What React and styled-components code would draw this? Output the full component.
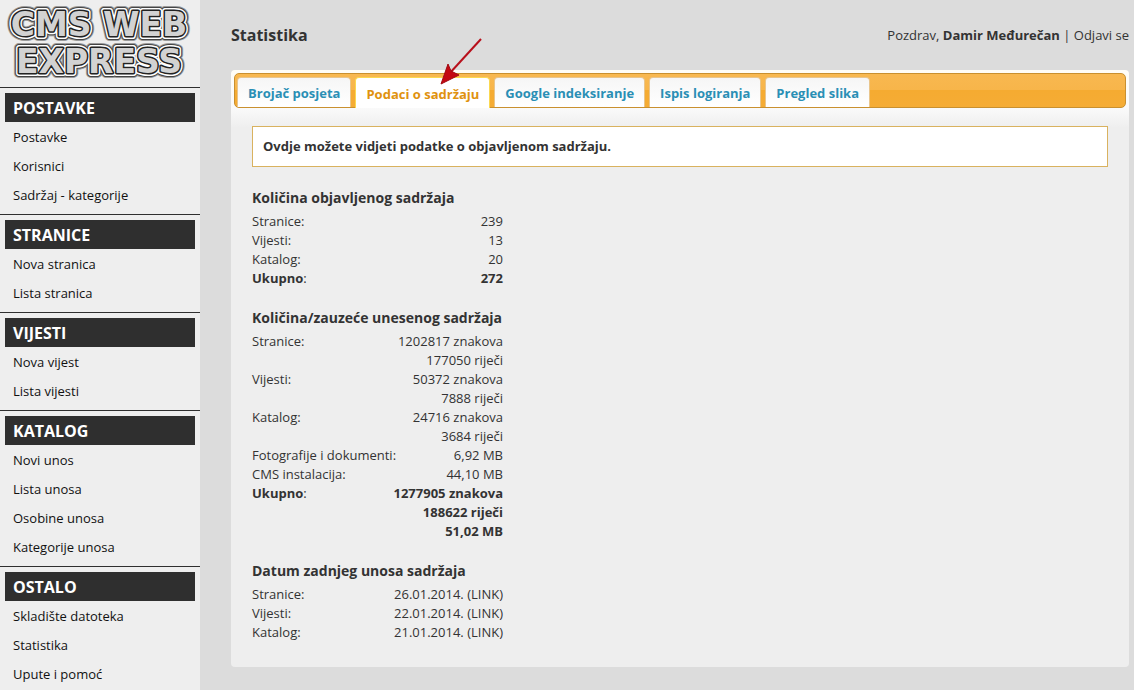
import React, { useState } from 'react';
import styled, { createGlobalStyle } from 'styled-components';

const GlobalStyle = createGlobalStyle`
  * {
    box-sizing: border-box;
  }

  body {
    margin: 0;
    background: #dcdcdc;
    color: #333;
    font-family: "Open Sans", "Noto Sans", sans-serif;
    font-size: 13px;
    line-height: 19px;
  }

  a {
    color: inherit;
    text-decoration: none;
  }
`;

const Page = styled.div`
  display: flex;
  min-height: 100vh;
`;

const Sidebar = styled.aside`
  flex: 0 0 200px;
  background: #eee;
  color: #111;
`;

const LogoLink = styled.a`
  display: block;
  height: 87px;

  svg {
    display: block;
  }

  text {
    font-family: "DejaVu Sans", sans-serif;
    font-size: 33px;
    font-weight: bold;
  }
`;

const MenuGroup = styled.nav`
  border-top: 1px solid #2f2f2f;
  padding: 5px 0;

  &:last-child {
    padding-bottom: 0;
  }
`;

const MenuTitle = styled.h2`
  margin: 0 5px;
  padding: 5px 8px 4px;
  background: #2f2f2f;
  color: #fff;
  font-size: 16px;
  line-height: 20px;
`;

const MenuLink = styled.a`
  display: block;
  padding: 6px 13px 4px;

  &:hover {
    text-decoration: underline;
  }
`;

const Main = styled.main`
  flex: 1;
  min-width: 0;
  padding: 0 5px 23px 31px;
`;

const Header = styled.header`
  display: flex;
  align-items: center;
  justify-content: space-between;
  height: 70px;

  h1 {
    margin: 0;
    font-size: 16px;
    line-height: 20px;
  }
`;

const Panel = styled.section`
  padding: 3px;
  border-radius: 4px;
  background: linear-gradient(#fffdf6 0, #fafafa 38px, #eee 58px);
`;

const TabBar = styled.div`
  display: flex;
  gap: 4px;
  height: 35px;
  padding: 3px 2px 0;
  border: 1px solid #c9902f;
  border-radius: 5px;
  background: linear-gradient(#f8b850 0, #f7b54a 50%, #f5ab31 50%, #f5ac35 100%);
`;

const TabItem = styled.div`
  position: relative;
  display: flex;
  margin-bottom: ${(props) => (props.$active ? '-1px' : '0')};
`;

const Tab = styled.button`
  padding: 2px 10px 0;
  border: 1px solid ${(props) => (props.$active ? '#fbd850' : '#e9c58c')};
  border-bottom: none;
  border-radius: 4px 4px 0 0;
  background: ${(props) => (props.$active ? '#fff' : 'linear-gradient(#f6f6f6, #fff)')};
  color: ${(props) => (props.$active ? '#e0920f' : '#2a8fb5')};
  font-family: inherit;
  font-size: 13px;
  font-weight: bold;
  line-height: 19px;
  white-space: nowrap;
  cursor: pointer;
`;

const Arrow = styled.svg`
  position: absolute;
  top: -39px;
  right: 8px;
  pointer-events: none;
`;

const Content = styled.div`
  padding: 18px 18px 22px;
`;

const Notice = styled.p`
  margin: 0 0 21px;
  padding: 10px;
  border: 1px solid #d9b25f;
  background: #fff;
  font-weight: bold;
`;

const Block = styled.section`
  & + & {
    margin-top: 20px;
  }

  h3 {
    margin: 0 0 4px;
    font-size: 14px;
    line-height: 20px;
  }
`;

const StatTable = styled.table`
  width: 251px;
  table-layout: fixed;
  border-collapse: collapse;

  th,
  td {
    padding: 0;
    vertical-align: top;
    white-space: nowrap;
  }

  th {
    font-weight: normal;
    text-align: left;
  }

  td {
    text-align: right;
  }
`;

const Value = styled.div`
  font-weight: ${(props) => (props.$total ? 'bold' : 'normal')};
`;

const menu = [
  { title: 'POSTAVKE', items: ['Postavke', 'Korisnici', 'Sadržaj - kategorije'] },
  { title: 'STRANICE', items: ['Nova stranica', 'Lista stranica'] },
  { title: 'VIJESTI', items: ['Nova vijest', 'Lista vijesti'] },
  { title: 'KATALOG', items: ['Novi unos', 'Lista unosa', 'Osobine unosa', 'Kategorije unosa'] },
  { title: 'OSTALO', items: ['Skladište datoteka', 'Statistika', 'Upute i pomoć'] },
];

const tabs = ['Brojač posjeta', 'Podaci o sadržaju', 'Google indeksiranje', 'Ispis logiranja', 'Pregled slika'];

const stats = [
  {
    title: 'Količina objavljenog sadržaja',
    rows: [
      { label: 'Stranice', values: ['239'] },
      { label: 'Vijesti', values: ['13'] },
      { label: 'Katalog', values: ['20'] },
      { label: 'Ukupno', values: ['272'], total: true },
    ],
  },
  {
    title: 'Količina/zauzeće unesenog sadržaja',
    rows: [
      { label: 'Stranice', values: ['1202817 znakova', '177050 riječi'] },
      { label: 'Vijesti', values: ['50372 znakova', '7888 riječi'] },
      { label: 'Katalog', values: ['24716 znakova', '3684 riječi'] },
      { label: 'Fotografije i dokumenti', values: ['6,92 MB'] },
      { label: 'CMS instalacija', values: ['44,10 MB'] },
      { label: 'Ukupno', values: ['1277905 znakova', '188622 riječi', '51,02 MB'], total: true },
    ],
  },
  {
    title: 'Datum zadnjeg unosa sadržaja',
    rows: [
      { label: 'Stranice', values: ['26.01.2014.'], link: true },
      { label: 'Vijesti', values: ['22.01.2014.'], link: true },
      { label: 'Katalog', values: ['21.01.2014.'], link: true },
    ],
  },
];

// The wordmark is stacked from the widest stroke to the narrowest
function Logo() {
  return (
    <LogoLink href="#">
      <svg width="200" height="87" viewBox="0 0 200 87" strokeLinejoin="round">
        <defs>
          <g id="wordmark">
            <text x="99" y="36" textAnchor="middle">CMS WEB</text>
            <text x="99" y="73" textAnchor="middle">EXPRESS</text>
          </g>
        </defs>
        <use href="#wordmark" fill="#999" stroke="#999" strokeWidth="10" />
        <use href="#wordmark" fill="#444" stroke="#444" strokeWidth="8" />
        <use href="#wordmark" fill="#fff" stroke="#fff" strokeWidth="6" />
        <use href="#wordmark" fill="#222" stroke="#222" strokeWidth="3" />
        <use href="#wordmark" fill="#d2d2d2" />
      </svg>
    </LogoLink>
  );
}

function StatBlock({ title, rows }) {
  return (
    <Block>
      <h3>{title}</h3>
      <StatTable>
        <tbody>
          {rows.map((row) => (
            <tr key={row.label}>
              <th scope="row">{row.total ? <b>{row.label}</b> : row.label}:</th>
              <td>
                {row.values.map((value) => (
                  <Value key={value} $total={row.total}>
                    {value}
                    {row.link && <> <a href="#">(LINK)</a></>}
                  </Value>
                ))}
              </td>
            </tr>
          ))}
        </tbody>
      </StatTable>
    </Block>
  );
}

function App() {
  const [activeTab, setActiveTab] = useState('Podaci o sadržaju');

  return (
    <>
      <GlobalStyle />
      <Page>
        <Sidebar>
          <Logo />
          {menu.map((group) => (
            <MenuGroup key={group.title}>
              <MenuTitle>{group.title}</MenuTitle>
              {group.items.map((item) => (
                <MenuLink key={item} href="#">{item}</MenuLink>
              ))}
            </MenuGroup>
          ))}
        </Sidebar>
        <Main>
          <Header>
            <h1>Statistika</h1>
            <div>
              Pozdrav, <b>Damir Međurečan</b> | <a href="#">Odjavi se</a>
            </div>
          </Header>
          <Panel>
            <TabBar role="tablist">
              {tabs.map((tab) => (
                <TabItem key={tab} $active={tab === activeTab}>
                  <Tab
                    role="tab"
                    aria-selected={tab === activeTab}
                    $active={tab === activeTab}
                    onClick={() => setActiveTab(tab)}
                  >
                    {tab}
                  </Tab>
                  {tab === 'Podaci o sadržaju' && (
                    <Arrow width="42" height="47" viewBox="0 0 42 47" aria-hidden="true">
                      <path d="M41 1 L9 36" stroke="#b8101c" strokeWidth="2" />
                      <path d="M1 46 L8 26 L11 33 L19 37 Z" fill="#c40812" stroke="#a00c14" strokeWidth="1" />
                    </Arrow>
                  )}
                </TabItem>
              ))}
            </TabBar>
            <Content>
              <Notice>Ovdje možete vidjeti podatke o objavljenom sadržaju.</Notice>
              {stats.map((block) => (
                <StatBlock key={block.title} title={block.title} rows={block.rows} />
              ))}
            </Content>
          </Panel>
        </Main>
      </Page>
    </>
  );
}

export default App;
